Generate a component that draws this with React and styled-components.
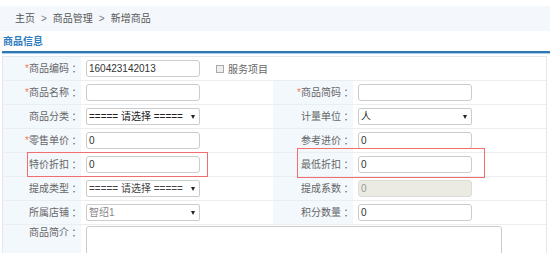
import React from 'react';
import styled, { createGlobalStyle } from 'styled-components';

const GlobalStyle = createGlobalStyle`
  body {
    margin: 0;
    background: #fff;
    font-family: 'Liberation Sans', 'Noto Sans CJK SC', sans-serif;
    font-size: 10px;
    color: #666;
  }
`;

const Page = styled.div`
  position: relative;
  width: 550px;
  height: 269px;
  padding-top: 6px;
  box-sizing: border-box;
  overflow: hidden;
`;

const Crumbs = styled.div`
  height: 25px;
  line-height: 25px;
  padding-left: 15px;
  background: #f4f8fc;
  color: #555;
`;

const Sep = styled.span`
  margin: 0 6px;
  color: #777;
`;

const SectionTitle = styled.div`
  margin-left: 2px;
  height: 20px;
  line-height: 22px;
  padding-left: 1px;
  color: #2e7dbf;
  font-weight: bold;
  border-bottom: 2px solid #2f78b7;
  box-shadow: 0 1px 0 #a8cbe8;
`;

const FormWrap = styled.div`
  margin: 3px 3px 0 2px;
  height: 197px;
  box-sizing: border-box;
  overflow: hidden;
  border: 1px solid #e4e8ec;
  border-bottom: none;
`;

const Grid = styled.div`
  display: grid;
  grid-template-columns: 78px 192px 80px 1fr;
`;

const Cell = styled.div`
  display: flex;
  align-items: ${(p) => (p.$top ? 'flex-start' : 'center')};
  height: ${(p) => (p.$tall ? '70px' : '23px')};
  border-bottom: 1px solid #ebeef1;
  grid-column: span ${(p) => p.$span || 1};
  box-sizing: content-box;
`;

const LabelCell = styled(Cell)`
  justify-content: flex-end;
  padding-right: 2px;
  background: #f3f8fd;
  color: #666;
  white-space: nowrap;
  line-height: 14px;
  ${(p) => p.$top && 'padding-top: 1px; height: 69px;'}
`;

const FieldCell = styled(Cell)`
  padding-left: 5px;
  ${(p) => p.$top && 'padding-top: 1px; height: 69px;'}
`;

const Req = styled.span`
  color: #f47a5c;
`;

const Colon = styled.span`
  font-family: 'Noto Sans CJK JP', sans-serif;
`;

const Input = styled.input`
  width: 114px;
  height: 17px;
  box-sizing: border-box;
  border: 1px solid ${(p) => (p.disabled ? '#dcdcd6' : '#ccc')};
  border-radius: 3px;
  padding: 0 2px;
  font: inherit;
  color: ${(p) => (p.disabled ? '#999' : '#333')};
  background: ${(p) => (p.disabled ? '#ebebe4' : '#fff')};
  outline: none;
`;

const SelectBox = styled.div`
  position: relative;
  width: 114px;
  height: 17px;
`;

const Select = styled.select`
  appearance: none;
  width: 100%;
  height: 100%;
  box-sizing: border-box;
  border: 1px solid #ccc;
  border-radius: 2px;
  padding: 0 2px;
  font: inherit;
  color: ${(p) => p.$tone || '#222'};
  background: #fff;
  outline: none;
`;

const Arrow = styled.span`
  position: absolute;
  right: 5px;
  top: 7px;
  width: 0;
  height: 0;
  border-left: 2.5px solid transparent;
  border-right: 2.5px solid transparent;
  border-top: 4px solid #222;
  pointer-events: none;
`;

const Check = styled.span`
  display: inline-block;
  width: 6px;
  height: 6px;
  margin-left: 16px;
  border: 1px solid #aaa;
  background: #eee;
`;

const CheckText = styled.span`
  margin-left: 4px;
  color: #666;
`;

const TextArea = styled.textarea`
  width: 416px;
  height: 60px;
  box-sizing: border-box;
  border: 1px solid #ccc;
  border-radius: 3px;
  resize: none;
  font: inherit;
  outline: none;
`;

const Mark = styled.div`
  position: absolute;
  left: ${(p) => p.$x}px;
  top: ${(p) => p.$y}px;
  width: ${(p) => p.$w}px;
  height: ${(p) => p.$h}px;
  box-sizing: border-box;
  border: 1.5px solid #f26d6d;
  pointer-events: none;
`;

const Label = ({ req, children, top }) => (
  <LabelCell $top={top}>
    {req && <Req>*</Req>}
    {children}
    <Colon>：</Colon>
  </LabelCell>
);

const Dropdown = ({ value, tone }) => (
  <SelectBox>
    <Select $tone={tone} defaultValue={value}>
      <option>{value}</option>
    </Select>
    <Arrow />
  </SelectBox>
);

export default function App() {
  return (
    <Page>
      <GlobalStyle />
      <Crumbs>
        主页<Sep>&gt;</Sep>商品管理<Sep>&gt;</Sep>新增商品
      </Crumbs>
      <SectionTitle>商品信息</SectionTitle>
      <FormWrap>
        <Grid>
          <Label req>商品编码</Label>
          <FieldCell $span={3}>
            <Input defaultValue="160423142013" />
            <Check />
            <CheckText>服务项目</CheckText>
          </FieldCell>

          <Label req>商品名称</Label>
          <FieldCell><Input /></FieldCell>
          <Label req>商品简码</Label>
          <FieldCell><Input /></FieldCell>

          <Label>商品分类</Label>
          <FieldCell><Dropdown value="===== 请选择 =====" /></FieldCell>
          <Label>计量单位</Label>
          <FieldCell><Dropdown value="人" /></FieldCell>

          <Label req>零售单价</Label>
          <FieldCell><Input defaultValue="0" /></FieldCell>
          <Label>参考进价</Label>
          <FieldCell><Input defaultValue="0" /></FieldCell>

          <Label>特价折扣</Label>
          <FieldCell><Input defaultValue="0" /></FieldCell>
          <Label>最低折扣</Label>
          <FieldCell><Input defaultValue="0" /></FieldCell>

          <Label>提成类型</Label>
          <FieldCell><Dropdown value="===== 请选择 =====" tone="#444" /></FieldCell>
          <Label>提成系数</Label>
          <FieldCell><Input defaultValue="0" disabled /></FieldCell>

          <Label>所属店铺</Label>
          <FieldCell><Dropdown value="智绍1" tone="#888" /></FieldCell>
          <Label>积分数量</Label>
          <FieldCell><Input defaultValue="0" /></FieldCell>

          <Label top>商品简介</Label>
          <FieldCell $span={3} $top>
            <TextArea />
          </FieldCell>
        </Grid>
      </FormWrap>
      <Mark $x={27} $y={152} $w={181} $h={25} />
      <Mark $x={297} $y={148} $w={188} $h={30} />
    </Page>
  );
}
